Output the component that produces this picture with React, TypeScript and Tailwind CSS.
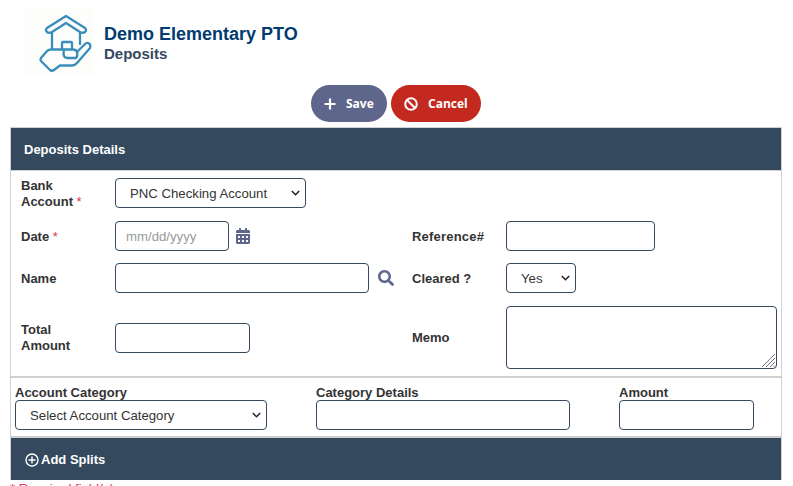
const sans = "font-['Liberation_Sans',Arial,sans-serif]";

function Logo() {
  return (
    <div className="ml-[23px] w-[71px] h-[68px] bg-[#fdfdfb] shrink-0">
      <svg width="71" height="68" viewBox="23 8 71 68" fill="none" stroke="#3a8dbb" strokeWidth="2.3" strokeLinecap="round" strokeLinejoin="round" style={{ filter: "blur(0.4px)" }}>
        <path d="M66 16 L47 28 Q45 30 47 32 Q49 33.5 52 32 L66 23 L80 32 Q83 33.5 85 32 Q87 30 85 28 Z" />
        <path d="M52 33 V49 M80 33 V44" />
        <path d="M62 49 V43 Q62 42 63 42 H71 Q72 42 72 43 V49" />
        <path d="M41 58 Q40 60 41 61 L50 70 Q52 71.5 54 70 L60 65.5 H72 Q75 65.5 77 63 L90 48 Q91 45 89 43.5 Q87 42 85 44 L77 52 Q76 49.5 73 49.5 H51 Q49 49.5 47 51 Z" />
        <path d="M64 50 Q63 54 64 56 Q65 58 68 58 H76 Q78 56 77 52" />
      </svg>
    </div>
  );
}

function Label({ children, className = "" }: { children: React.ReactNode; className?: string }) {
  return <label className={`block font-bold text-[13px] leading-[16px] text-[#333] ${className}`}>{children}</label>;
}

const Req = () => <span className="text-[#e0334c] font-normal"> *</span>;

const field = "block h-[30px] bg-white border border-[#34495e] rounded-[4px] outline-none text-[13.2px]";

function Chevron() {
  return (
    <svg width="9" height="6" viewBox="0 0 9 6" className="absolute right-[5px] top-[11px]" fill="none" stroke="#222" strokeWidth="1.5">
      <path d="M0.8 1 L4.500 4.700 L8.200 1" />
    </svg>
  );
}

function Select({ value, className }: { value: string; className: string }) {
  return (
    <div className={`relative flex items-center pl-[14px] pt-px text-[#333] ${field} ${className}`}>
      <span>{value}</span>
      <Chevron />
    </div>
  );
}

export default function App() {
  return (
    <div className={`w-[793px] h-[486px] overflow-hidden bg-white ${sans}`}>
      <header className="flex items-start pt-[8px] h-[85px]">
        <Logo />
        <div className="ml-[10px] pt-[16px]">
          <div className="text-[18px] leading-[21px] font-bold text-[#003b71]">Demo Elementary PTO</div>
          <div className="text-[15px] leading-[17px] font-bold text-[#34495e]">Deposits</div>
        </div>
      </header>

      <div className="flex justify-center gap-[4px] h-[37px] pr-px">
        <button className="flex items-center w-[76px] h-[37px] pl-[13px] rounded-full bg-[#5f668c] text-white font-['Open_Sans',sans-serif] font-bold text-[12px]">
          <svg width="12" height="12" viewBox="0 0 12 12" fill="none" stroke="white" strokeWidth="2.2"><path d="M6 0.5 V11.5 M0.5 6 H11.5" /></svg>
          <span className="ml-[10px] pt-px">Save</span>
        </button>
        <button className="flex items-center w-[90px] h-[37px] pl-[13px] rounded-full bg-[#c4291f] text-white font-['Open_Sans',sans-serif] font-bold text-[12px]">
          <svg width="14" height="14" viewBox="0 0 14 14" fill="none" stroke="white" strokeWidth="2"><circle cx="7" cy="7" r="5.8" /><path d="M3 3 L11 11" /></svg>
          <span className="ml-[10px] pt-px">Cancel</span>
        </button>
      </div>

      <section className="mt-[5px] ml-[10px] w-[772px] border border-[#d0d0d0] border-b-0">
        <div className="h-[42px] flex items-center pl-[13px] pt-[2px] bg-[#34495e] text-white font-bold text-[13px]">Deposits Details</div>

        <div className="border-t border-[#d0d0d0] pt-[7px] pb-[7px] pl-[10px] border-b-2 border-b-[#d0d0d0]">
          <div className="flex items-center h-[30px]">
            <Label className="w-[94px] pt-[2px]">Bank<br />Account<Req /></Label>
            <Select value="PNC Checking Account" className="w-[191px]" />
          </div>

          <div className="flex items-center h-[30px] mt-[13px]">
            <Label className="w-[94px] pt-[2px]">Date<Req /></Label>
            <div className={`${field} w-[114px] flex items-center pl-[10px] pt-px text-[#9a9a9a]`}>mm/dd/yyyy</div>
            <svg width="14" height="16" viewBox="0 0 448 512" className="ml-[7px]" fill="#5f668c">
              <path d="M0 464c0 26.500 21.500 48 48 48h352c26.500 0 48-21.500 48-48V192H0v272zm320-196c0-6.600 5.400-12 12-12h40c6.600 0 12 5.400 12 12v40c0 6.600-5.400 12-12 12h-40c-6.600 0-12-5.400-12-12v-40zm0 128c0-6.600 5.400-12 12-12h40c6.600 0 12 5.400 12 12v40c0 6.600-5.400 12-12 12h-40c-6.600 0-12-5.400-12-12v-40zM192 268c0-6.600 5.400-12 12-12h40c6.600 0 12 5.400 12 12v40c0 6.600-5.400 12-12 12h-40c-6.600 0-12-5.400-12-12v-40zm0 128c0-6.600 5.400-12 12-12h40c6.600 0 12 5.400 12 12v40c0 6.600-5.400 12-12 12h-40c-6.600 0-12-5.400-12-12v-40zM64 268c0-6.600 5.400-12 12-12h40c6.600 0 12 5.400 12 12v40c0 6.600-5.400 12-12 12H76c-6.600 0-12-5.400-12-12v-40zm0 128c0-6.600 5.400-12 12-12h40c6.600 0 12 5.400 12 12v40c0 6.600-5.400 12-12 12H76c-6.600 0-12-5.400-12-12v-40zM400 64h-48V16c0-8.800-7.200-16-16-16h-32c-8.800 0-16 7.200-16 16v48H160V16c0-8.800-7.200-16-16-16h-32c-8.800 0-16 7.200-16 16v48H48C21.500 64 0 85.500 0 112v48h448v-48c0-26.500-21.500-48-48-48z" />
            </svg>
            <Label className="ml-[162px] w-[94px] pt-[2px] tracking-[0.2px]">Reference#</Label>
            <div className={`${field} w-[149px]`} />
          </div>

          <div className="flex items-center h-[30px] mt-[12px]">
            <Label className="w-[94px] pt-[2px]">Name</Label>
            <div className={`${field} w-[254px]`} />
            <svg width="16" height="16" viewBox="0 0 512 512" className="ml-[9px]" fill="#5f668c">
              <path d="M505 442.700L405.300 343c-4.500-4.500-10.600-7-17-7H372c27.600-35.300 44-79.700 44-128C416 93.100 322.900 0 208 0S0 93.100 0 208s93.100 208 208 208c48.300 0 92.700-16.400 128-44v16.300c0 6.400 2.500 12.500 7 17l99.700 99.700c9.400 9.400 24.600 9.400 33.900 0l28.300-28.300c9.400-9.400 9.400-24.600.1-34zM208 336c-70.700 0-128-57.200-128-128 0-70.700 57.200-128 128-128 70.700 0 128 57.200 128 128 0 70.700-57.200 128-128 128z" />
            </svg>
            <Label className="ml-[18px] w-[94px] pt-[2px]">Cleared ?</Label>
            <Select value="Yes" className="w-[70px]" />
          </div>

          <div className="flex items-center h-[63px] mt-[13px]">
            <Label className="w-[94px]">Total<br />Amount</Label>
            <div className={`${field} w-[135px]`} />
            <Label className="ml-[162px] w-[94px]">Memo</Label>
            <div className={`relative ${field} !h-[63px] w-[271px]`}>
              <svg width="15" height="15" viewBox="0 0 15 15" className="absolute right-0 bottom-0" stroke="#777" strokeWidth="1">
                <path d="M14 1 L1 14 M14 5 L5 14 M14 9 L9 14 M14 12.500 L12.500 14" />
              </svg>
            </div>
          </div>
        </div>

        <div className="flex items-start h-[60px] pl-[4px] border-b-2 border-b-[#d0d0d0]">
          <div className="w-[301px] pt-[7px]">
            <Label>Account Category</Label>
            <Select value="Select Account Category" className="w-[252px] -mt-px" />
          </div>
          <div className="w-[303px] pt-[7px]">
            <Label>Category Details</Label>
            <div className={`${field} w-[254px] -mt-px`} />
          </div>
          <div className="pt-[7px]">
            <Label>Amount</Label>
            <div className={`${field} w-[135px] -mt-px`} />
          </div>
        </div>

        <div className="h-[42px] flex items-center pl-[14px] pt-[2px] bg-[#34495e] text-white font-bold text-[13px]">
          <svg width="14" height="14" viewBox="0 0 14 14" fill="none" stroke="white" strokeWidth="1.4"><circle cx="7" cy="7" r="6" /><path d="M7 3.500 V10.500 M3.500 7 H10.500" /></svg>
          <span className="ml-[2px]">Add Splits</span>
        </div>
      </section>

      <div className="ml-[10px] mt-px text-[13px] leading-[15px] text-[#e0334c]">* Required field(s)</div>
    </div>
  );
}
